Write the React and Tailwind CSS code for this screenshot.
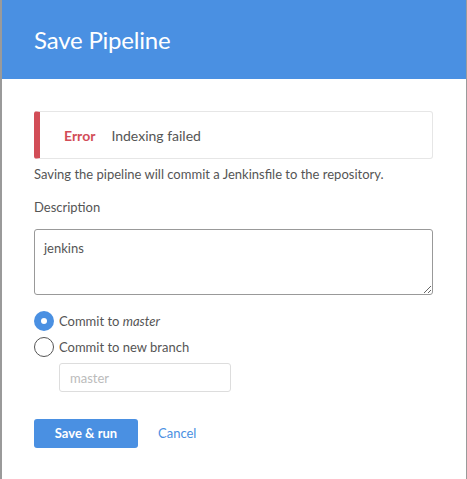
import React, { useState } from 'react';

export default function App() {
  const [target, setTarget] = useState('master');
  const [description, setDescription] = useState('jenkins');

  return (
    <div className="w-[467px] h-[479px] bg-white font-['Lato',sans-serif] border-l-2 border-r border-[#9a9a9a] overflow-hidden">
      {/* Header */}
      <div className="h-[79px] bg-[#4a90e2] px-8 flex items-center">
        <h1 className="text-[24px] text-white font-normal leading-none tracking-[-0.2px]">Save Pipeline</h1>
      </div>

      {/* Body */}
      <div className="px-8 pt-8">
        {/* Error */}
        <div className="flex items-center h-[48px] w-[399px] border border-[#e6e6e6] border-l-[6px] border-l-[#d24d57] rounded-[3px] pl-6 text-[14px]">
          <span className="text-[#d24d57] font-bold mr-4">Error</span>
          <span className="text-[#555]">Indexing failed</span>
        </div>

        <p className="mt-[5px] text-[13px] text-[#555] leading-5">
          Saving the pipeline will commit a Jenkinsfile to the repository.
        </p>

        <label className="block mt-[13px] text-[13px] text-[#555] leading-5">Description</label>
        <textarea
          value={description}
          onChange={(e) => setDescription(e.target.value)}
          className="mt-[12px] block w-[399px] h-[66px] border border-[#999] rounded-[3px] px-[9px] pt-[9px] text-[13px] text-[#555] outline-none resize-y"
        />

        {/* Branch options */}
        <div className="mt-[16px] flex flex-col gap-[6px]">
          <label className="flex items-center gap-[5px] h-[20px] text-[13px] leading-5 text-[#555] cursor-pointer">
            <span
              onClick={() => setTarget('master')}
              className={target === 'master'
                ? 'w-[20px] h-[20px] rounded-full bg-[#4a90e2] flex items-center justify-center'
                : 'w-[20px] h-[20px] rounded-full border border-[#555]'}
            >
              {target === 'master' && <span className="w-[6px] h-[6px] rounded-full bg-white" />}
            </span>
            <span>Commit to <i>master</i></span>
          </label>
          <label className="flex items-center gap-[5px] h-[20px] text-[13px] leading-5 text-[#555] cursor-pointer">
            <span
              onClick={() => setTarget('new')}
              className={target === 'new'
                ? 'w-[20px] h-[20px] rounded-full bg-[#4a90e2] flex items-center justify-center'
                : 'w-[20px] h-[20px] rounded-full border border-[#555]'}
            >
              {target === 'new' && <span className="w-[6px] h-[6px] rounded-full bg-white" />}
            </span>
            <span>Commit to new branch</span>
          </label>
          <input
            type="text"
            placeholder="master"
            className="ml-[25px] w-[172px] h-[29px] border border-[#ddd] rounded-[3px] px-[10px] text-[13px] text-[#555] placeholder:text-[#bbb] outline-none"
          />
        </div>

        {/* Actions */}
        <div className="mt-[27px] flex items-center">
          <button className="w-[104px] h-[29px] bg-[#4a90e2] text-white text-[13px] font-bold rounded-[3px]">
            Save &amp; run
          </button>
          <button className="ml-[20px] text-[13px] text-[#4a90e2]">Cancel</button>
        </div>
      </div>
    </div>
  );
}
